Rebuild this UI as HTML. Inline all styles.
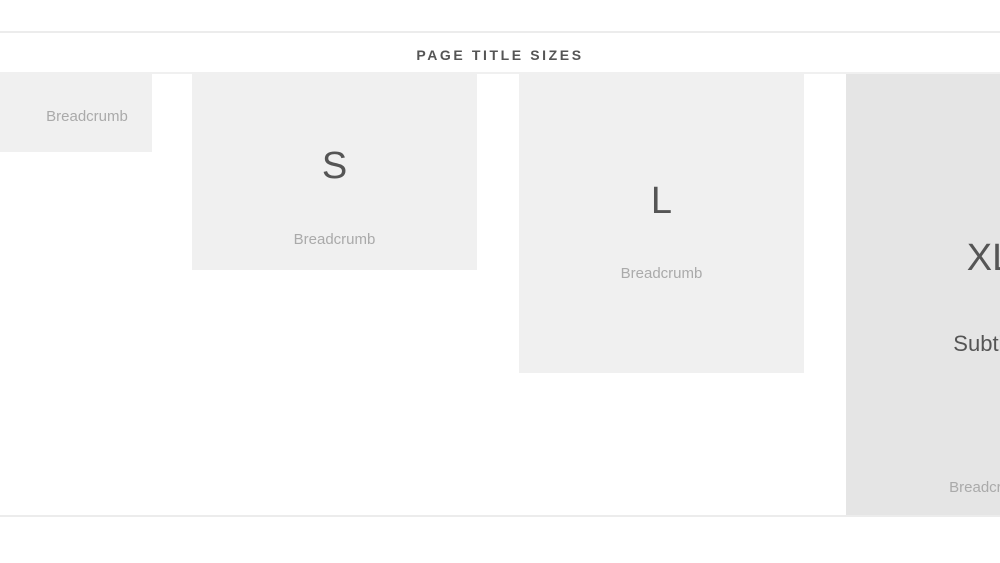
<!DOCTYPE html>
<html><head><style>
html,body{margin:0;padding:0;width:1000px;height:563px;overflow:hidden;background:#fff;font-family:"Liberation Sans",sans-serif;position:relative}
.line{position:absolute;left:0;width:1000px;height:2px;background:#ececec}
.t{position:absolute;top:47px;left:0;width:1000px;text-align:center;font-size:14px;font-weight:bold;letter-spacing:2.6px;color:#555}
.b{position:absolute;background:#f0f0f0;text-align:center}
.b span{position:absolute;left:0;right:0;white-space:nowrap}
.bc{font-size:15px;color:#aaa}
.big{color:#555;font-size:38px}
</style></head><body>
<div class="line" style="top:31px"></div>
<div class="t">PAGE TITLE SIZES</div>
<div class="line" style="top:72px;height:2px;background:#f0f0f0"></div>
<div class="b" style="left:-60px;top:74px;width:212px;height:78px"><span class="bc" style="left:82px;top:34px">Breadcrumb</span></div>
<div class="b" style="left:192px;top:74px;width:285px;height:196px"><span class="big" style="top:71px">S</span><span class="bc" style="top:157px">Breadcrumb</span></div>
<div class="b" style="left:519px;top:74px;width:285px;height:299px"><span class="big" style="top:106px">L</span><span class="bc" style="top:191px">Breadcrumb</span></div>
<div class="b" style="left:846px;top:74px;width:288px;height:443px;background:#e5e5e5"><span class="big" style="top:163px">XL</span><span style="top:257px;font-size:22px;color:#555">Subtitle</span><span class="bc" style="top:405px">Breadcrumb</span></div>
<div class="line" style="top:515px"></div>
</body></html>
